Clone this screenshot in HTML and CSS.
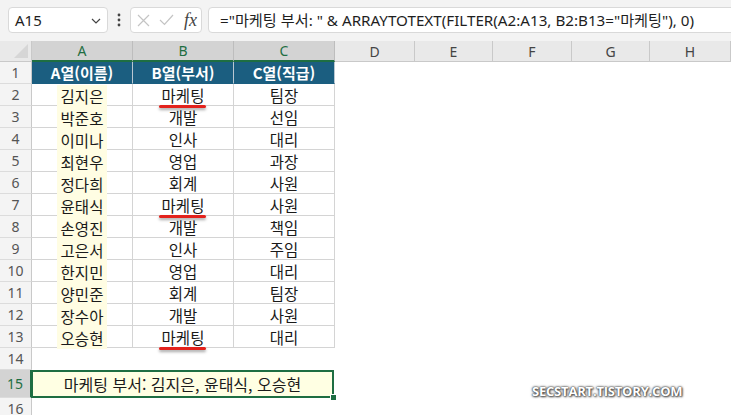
FILE: index.html
```html
<!DOCTYPE html>
<html lang="ko">
<head>
<meta charset="utf-8">
<title>Sheet</title>
<link rel="stylesheet" href="styles.css">
</head>
<body>
<div class="app">
  <div class="toolbar">
    <div class="namebox">
      <span>A15</span>
      <svg class="chev" width="10" height="6" viewBox="0 0 10 6"><path d="M1 1 L5 5 L9 1" fill="none" stroke="#444" stroke-width="1.2"/></svg>
    </div>
    <div class="dots">
      <svg width="4" height="14" viewBox="0 0 4 14"><circle cx="2" cy="2" r="1.4" fill="#444"/><circle cx="2" cy="7" r="1.4" fill="#444"/><circle cx="2" cy="12" r="1.4" fill="#444"/></svg>
    </div>
    <div class="fxbox">
      <svg width="13" height="13" viewBox="0 0 13 13"><path d="M1 1 L12 12 M12 1 L1 12" stroke="#c4c4c4" stroke-width="1.2"/></svg>
      <svg width="15" height="12" viewBox="0 0 15 12"><path d="M1 6 L5.5 10.5 L14 1" fill="none" stroke="#c4c4c4" stroke-width="1.2"/></svg>
      <span class="fx">fx</span>
    </div>
    <div class="formula">="마케팅 부서: " &amp; ARRAYTOTEXT(FILTER(A2:A13, B2:B13="마케팅"), 0)</div>
  </div>

  <div class="sheet">
    <div class="row colheads">
      <div class="corner"><svg width="14" height="14" viewBox="0 0 14 14"><path d="M14 0 L14 14 L0 14 Z" fill="#d6d6d6"/></svg></div>
      <div class="ch ca sel">A</div>
      <div class="ch ca sel">B</div>
      <div class="ch ca sel">C</div>
      <div class="ch cd">D</div>
      <div class="ch ce">E</div>
      <div class="ch cf">F</div>
      <div class="ch cg">G</div>
      <div class="ch chh">H</div>
    </div>

    <div class="row">
      <div class="rh">1</div>
      <div class="c th">A열(이름)</div>
      <div class="c th">B열(부서)</div>
      <div class="c th">C열(직급)</div>
    </div>
    <div class="row">
      <div class="rh">2</div>
      <div class="c"><span class="name">김지은</span></div>
      <div class="c"><span class="mark">마케팅</span></div>
      <div class="c">팀장</div>
    </div>
    <div class="row">
      <div class="rh">3</div>
      <div class="c"><span class="name">박준호</span></div>
      <div class="c">개발</div>
      <div class="c">선임</div>
    </div>
    <div class="row">
      <div class="rh">4</div>
      <div class="c"><span class="name">이미나</span></div>
      <div class="c">인사</div>
      <div class="c">대리</div>
    </div>
    <div class="row">
      <div class="rh">5</div>
      <div class="c"><span class="name">최현우</span></div>
      <div class="c">영업</div>
      <div class="c">과장</div>
    </div>
    <div class="row">
      <div class="rh">6</div>
      <div class="c"><span class="name">정다희</span></div>
      <div class="c">회계</div>
      <div class="c">사원</div>
    </div>
    <div class="row">
      <div class="rh">7</div>
      <div class="c"><span class="name">윤태식</span></div>
      <div class="c"><span class="mark">마케팅</span></div>
      <div class="c">사원</div>
    </div>
    <div class="row">
      <div class="rh">8</div>
      <div class="c"><span class="name">손영진</span></div>
      <div class="c">개발</div>
      <div class="c">책임</div>
    </div>
    <div class="row">
      <div class="rh">9</div>
      <div class="c"><span class="name">고은서</span></div>
      <div class="c">인사</div>
      <div class="c">주임</div>
    </div>
    <div class="row">
      <div class="rh">10</div>
      <div class="c"><span class="name">한지민</span></div>
      <div class="c">영업</div>
      <div class="c">대리</div>
    </div>
    <div class="row">
      <div class="rh">11</div>
      <div class="c"><span class="name">양민준</span></div>
      <div class="c">회계</div>
      <div class="c">팀장</div>
    </div>
    <div class="row">
      <div class="rh">12</div>
      <div class="c"><span class="name">장수아</span></div>
      <div class="c">개발</div>
      <div class="c">사원</div>
    </div>
    <div class="row">
      <div class="rh">13</div>
      <div class="c"><span class="name">오승현</span></div>
      <div class="c"><span class="mark">마케팅</span></div>
      <div class="c">대리</div>
    </div>
    <div class="row">
      <div class="rh">14</div>
    </div>
    <div class="row tall">
      <div class="rh rsel">15</div>
      <div class="result">마케팅 부서: 김지은, 윤태식, 오승현<span class="handle"></span></div>
    </div>
    <div class="row">
      <div class="rh">16</div>
    </div>
  </div>

  <div class="watermark">SECSTART.TISTORY.COM</div>
</div>
</body>
</html>
```

FILE: styles.css
```css
* { box-sizing: border-box; margin: 0; padding: 0; }

body {
  width: 731px;
  height: 415px;
  overflow: hidden;
  background: #ffffff;
  font-family: "Noto Sans", "Noto Sans CJK KR", sans-serif;
  color: #222;
}

.app {
  position: relative;
  width: 731px;
  height: 415px;
  overflow: hidden;
}

/* ---------- formula bar ---------- */
.toolbar {
  height: 41px;
  background: #f3f3f3;
  display: flex;
  align-items: flex-start;
  padding: 7px 0 0 8px;
}

.namebox {
  width: 100px;
  height: 26px;
  background: #fff;
  border: 1px solid #d9d9d9;
  border-radius: 4px;
  display: flex;
  align-items: center;
  justify-content: space-between;
  padding: 0 6px 0 6px;
  font-size: 15px;
  color: #1e1e1e;
}

.chev { margin-top: 1px; }

.dots {
  width: 22px;
  height: 26px;
  display: flex;
  align-items: center;
  justify-content: center;
}

.fxbox {
  width: 72px;
  height: 26px;
  background: #fff;
  border: 1px solid #d9d9d9;
  border-radius: 4px;
  display: flex;
  align-items: center;
  gap: 9px;
  padding-left: 6px;
}

.fx {
  font-family: "Liberation Serif", serif;
  font-style: italic;
  font-size: 18px;
  color: #444;
  margin-left: 1px;
  line-height: 1;
}

.formula {
  flex: 1;
  height: 26px;
  margin-left: 6px;
  margin-right: -12px;
  background: #fff;
  border: 1px solid #d9d9d9;
  border-radius: 4px;
  padding-left: 11px;
  font-size: 15.2px;
  line-height: 24px;
  white-space: nowrap;
  color: #1e1e1e;
  font-family: "Noto Sans", "Noto Sans CJK KR", sans-serif;
}

/* ---------- sheet ---------- */
.row {
  display: flex;
  height: 22px;
}

.row.tall { height: 28px; }

.colheads { height: 21px; }

.corner {
  width: 32px;
  height: 21px;
  background: #e9e9e9;
  border-right: 1px solid #c9c9c9;
  border-bottom: 1px solid #c9c9c9;
  display: flex;
  align-items: flex-end;
  justify-content: flex-end;
  padding: 0 3px 3px 0;
}

.ch {
  height: 21px;
  background: #e9e9e9;
  border-right: 1px solid #c9c9c9;
  border-bottom: 1px solid #c9c9c9;
  display: flex;
  align-items: center;
  justify-content: center;
  font-size: 14px;
  color: #444;
}

.ch.ca { width: 101px; }
.ch.cd { width: 80px; }
.ch.ce { width: 78px; }
.ch.cf { width: 79px; }
.ch.cg { width: 78px; }
.ch.chh { flex: 1; }

.ch.sel {
  background: #d3d3d3;
  color: #1e6e42;
  border-bottom: 2px solid #1e6e42;
  border-right-color: #bdbdbd;
}

.rh {
  width: 32px;
  flex: none;
  background: #f4f4f4;
  border-right: 1px solid #c9c9c9;
  border-bottom: 1px solid #dcdcdc;
  display: flex;
  align-items: center;
  justify-content: center;
  font-size: 14px;
  color: #555;
}

.rh.rsel {
  background: #d3d3d3;
  color: #1e6e42;
  border-right: 2px solid #1e6e42;
}

.c {
  width: 101px;
  flex: none;
  border-right: 1px solid #d4d4d4;
  border-bottom: 1px solid #d4d4d4;
  display: flex;
  align-items: center;
  justify-content: center;
  font-family: "Noto Sans CJK KR", sans-serif;
  font-size: 15.5px;
  line-height: 20px;
  color: #1a1a1a;
}

.c.th {
  background: #1b5e80;
  color: #fff;
  font-weight: 700;
  font-size: 15px;
  border-right-color: #b9c7d1;
  border-bottom-color: #1b5e80;
}

.name {
  display: flex;
  align-items: center;
  justify-content: center;
  width: 50px;
  height: 22px;
  margin-top: 1px;
  margin-bottom: -1px;
  background: #fffde3;
}

.mark {
  position: relative;
}

.mark::after {
  content: "";
  position: absolute;
  left: -3px;
  right: -2px;
  bottom: -3px;
  height: 3px;
  border-radius: 2px;
  background: #e3221c;
  box-shadow: 0 2px 3px rgba(0, 0, 0, 0.35);
}

.result {
  position: relative;
  width: 303px;
  height: 28px;
  background: #ffffe3;
  border: 2px solid #1e6e42;
  margin-left: -1px;
  display: flex;
  align-items: center;
  justify-content: center;
  font-family: "Noto Sans CJK KR", sans-serif;
  font-size: 16px;
  color: #1a1a1a;
}

.handle {
  position: absolute;
  right: -5px;
  bottom: -5px;
  width: 7px;
  height: 7px;
  background: #1e6e42;
  border: 1px solid #fff;
}

.watermark {
  position: absolute;
  left: 532px;
  top: 382px;
  font-family: "Open Sans", sans-serif;
  font-weight: 700;
  font-size: 13px;
  letter-spacing: -0.2px;
  color: #fff;
  text-shadow: 0 0 1px #444, 0 0 2px #555, 0 0 3px #666, 1px 1px 2px #555;
}
```
